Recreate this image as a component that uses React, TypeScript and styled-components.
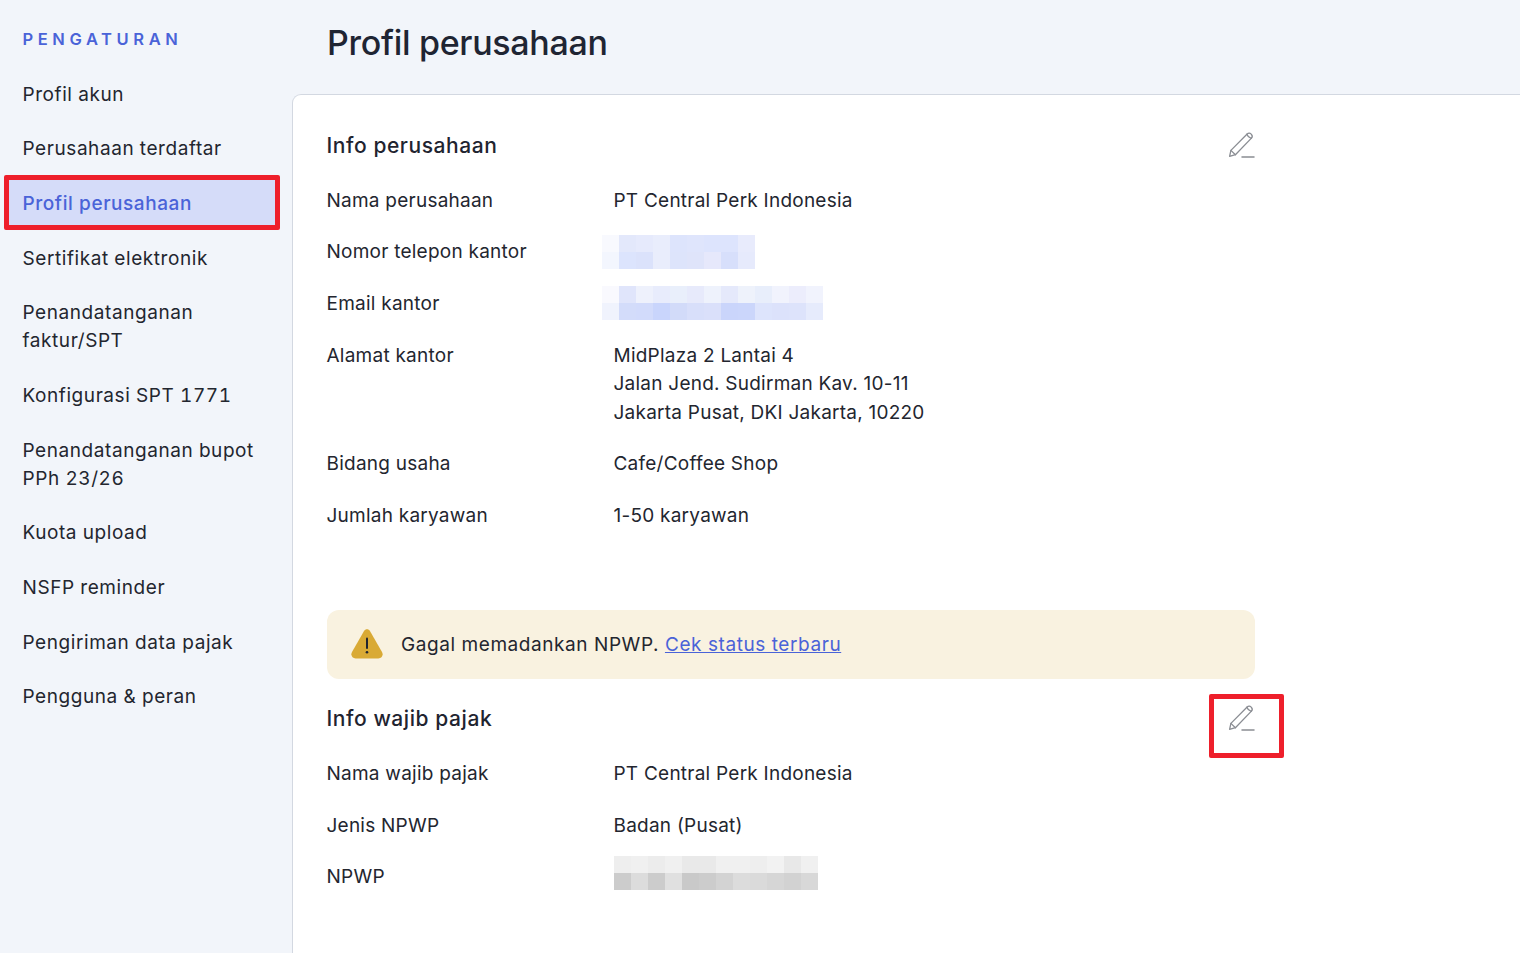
import React from "react";
import styled, { createGlobalStyle } from "styled-components";

const GlobalStyle = createGlobalStyle`
  html, body {
    margin: 0;
    padding: 0;
    height: 100%;
    overflow: hidden;
    background: #f2f5fa;
    font-family: Inter, "Liberation Sans", sans-serif;
    color: #1f2430;
  }
`;

const navItems = [
  "Profil akun",
  "Perusahaan terdaftar",
  "Profil perusahaan",
  "Sertifikat elektronik",
  "Penandatanganan faktur/SPT",
  "Konfigurasi SPT 1771",
  "Penandatanganan bupot PPh 23/26",
  "Kuota upload",
  "NSFP reminder",
  "Pengiriman data pajak",
  "Pengguna & peran",
];

const phonePixels = [
  ["#f8f9fe", "#e3e8fb", "#e6eafc", "#e9edfc", "#dde4fc", "#dfe5fc", "#dde4fd", "#dde4fd", "#e8ebfc"],
  ["#f3f6fe", "#dce4fd", "#dbe2fb", "#e9edfc", "#dde4fb", "#dfe4fa", "#e6e8fb", "#d7dffb", "#e6eafc"],
];

const emailPixels = [
  ["#f9f9fe", "#e0e5fb", "#eef1fc", "#e8ecfc", "#e9effb", "#e7eafb", "#eef2fc", "#e5e9fb", "#eef2fb", "#e8eefb", "#f1f3fd", "#ecedfc", "#f1f3fd"],
  ["#f0f3fd", "#d3dcfa", "#d2dbfb", "#c9d5fc", "#d2dbf9", "#d8dffa", "#dae0fa", "#cad5fb", "#cbd6fb", "#dde4fc", "#dce2fb", "#dde3fb", "#e6ebfc"],
];

const npwpPixels = [
  ["#eeeeee", "#f0f0f0", "#ececec", "#f0f0f0", "#e9e9e9", "#e9e9e9", "#f0f0f0", "#f0f0f0", "#eeeeee", "#f2f2f2", "#e8e8e8", "#f0f0f0"],
  ["#cccccc", "#dcdcdc", "#cccccc", "#e0e0e0", "#c9c9c9", "#cccccc", "#d3d3d3", "#dcdcdc", "#dadada", "#d6d6d6", "#d2d2d2", "#d8d8d8"],
];

function Pixels({ rows, blue }: { rows: string[][]; blue?: boolean }) {
  return (
    <PixelGrid $blue={blue}>
      {rows.map((row, r) => (
        <PixelRow key={r}>
          {row.map((color, c) => (
            <Pixel key={c} $color={color} />
          ))}
        </PixelRow>
      ))}
    </PixelGrid>
  );
}

function PencilIcon() {
  return (
    <svg width="28" height="28" viewBox="0 0 28 28" fill="none" stroke="#8a8d93" strokeWidth="1.3" strokeLinejoin="round" strokeLinecap="round">
      <path d="M2.6 25.4 L3.9 19.4 L19.9 3.2 C21.2 2 23.1 2 24.2 3.1 C25.4 4.3 25.4 6.2 24.2 7.4 L8.4 23.7 Z" />
      <path d="M19.9 3.2 C20.6 5.2 22.2 6.8 24.2 7.4" />
      <path d="M3.9 19.4 L8.4 23.7" />
      <path d="M15 26 H27" strokeWidth="1.5" />
    </svg>
  );
}

function WarningIcon() {
  return (
    <svg width="32" height="30" viewBox="0 0 32 30">
      <path
        d="M12.9 2.2 C14.5 -0.4 17.5 -0.4 19.1 2.2 L31 23 C32.7 26 30.8 29.5 27.4 29.5 H4.6 C1.2 29.5 -0.7 26 1 23 Z"
        fill="#d9aa35"
      />
      <path d="M16 9.5 V19" stroke="#1f2430" strokeWidth="2" strokeLinecap="round" />
      <circle cx="16" cy="23.2" r="1.3" fill="#1f2430" />
    </svg>
  );
}

export default function App() {
  return (
    <>
      <GlobalStyle />
      <Page>
        <Sidebar>
          <SidebarTitle>PENGATURAN</SidebarTitle>
          <NavList>
            {navItems.map((item) => (
              <NavItem key={item} $active={item === "Profil perusahaan"}>
                {item}
              </NavItem>
            ))}
          </NavList>
        </Sidebar>
        <Main>
          <PageHeader>
            <PageTitle>Profil perusahaan</PageTitle>
          </PageHeader>
          <Panel>
            <Content>
              <SectionHead>
                <SectionTitle>Info perusahaan</SectionTitle>
                <EditButton>
                  <PencilIcon />
                </EditButton>
              </SectionHead>
              <Rows>
                <Row>
                  <Label>Nama perusahaan</Label>
                  <Value>PT Central Perk Indonesia</Value>
                </Row>
                <Row>
                  <Label>Nomor telepon kantor</Label>
                  <Pixels rows={phonePixels} blue />
                </Row>
                <Row>
                  <Label>Email kantor</Label>
                  <Pixels rows={emailPixels} blue />
                </Row>
                <Row>
                  <Label>Alamat kantor</Label>
                  <Value>
                    MidPlaza 2 Lantai 4
                    <br />
                    Jalan Jend. Sudirman Kav. 10-11
                    <br />
                    Jakarta Pusat, DKI Jakarta, 10220
                  </Value>
                </Row>
                <Row>
                  <Label>Bidang usaha</Label>
                  <Value>Cafe/Coffee Shop</Value>
                </Row>
                <Row>
                  <Label>Jumlah karyawan</Label>
                  <Value>1-50 karyawan</Value>
                </Row>
              </Rows>
              <Banner>
                <WarningIcon />
                <BannerText>
                  Gagal memadankan NPWP. <BannerLink href="#">Cek status terbaru</BannerLink>
                </BannerText>
              </Banner>
              <SectionHead $tight>
                <SectionTitle>Info wajib pajak</SectionTitle>
                <EditButton>
                  <PencilIcon />
                  <Marker />
                </EditButton>
              </SectionHead>
              <Rows>
                <Row>
                  <Label>Nama wajib pajak</Label>
                  <Value>PT Central Perk Indonesia</Value>
                </Row>
                <Row>
                  <Label>Jenis NPWP</Label>
                  <Value>Badan (Pusat)</Value>
                </Row>
                <Row>
                  <Label>NPWP</Label>
                  <Pixels rows={npwpPixels} />
                </Row>
              </Rows>
            </Content>
          </Panel>
        </Main>
      </Page>
    </>
  );
}

const Page = styled.div`
  display: flex;
  width: 1520px;
  height: 953px;
  overflow: hidden;
  background: #f2f5fa;
`;

const Sidebar = styled.aside`
  width: 292px;
  flex-shrink: 0;
  padding: 29px 11px 0 3.5px;
  box-sizing: border-box;
`;

const SidebarTitle = styled.div`
  padding-left: 19px;
  font-size: 16.5px;
  line-height: 20px;
  font-weight: 600;
  letter-spacing: 4.6px;
  color: #4a63d8;
`;

const NavList = styled.nav`
  display: flex;
  flex-direction: column;
  margin-top: 18.4px;
`;

const NavItem = styled.div<{ $active?: boolean }>`
  box-sizing: border-box;
  width: ${(p) => (p.$active ? "276.4px" : "277px")};
  font-size: 19px;
  line-height: 28px;
  letter-spacing: 0.57px;
  font-variant-numeric: tabular-nums;
  padding: ${(p) => (p.$active ? "10.1px 14px 6.9px" : "13.34px 19px")};
  margin: ${(p) => (p.$active ? "-1.6px 0 1.28px" : "0")};
  font-weight: ${(p) => (p.$active ? 500 : 400)};
  color: ${(p) => (p.$active ? "#4a63d8" : "#23262f")};
  background: ${(p) => (p.$active ? "#d5dcf9" : "transparent")};
  border: ${(p) => (p.$active ? "5px solid #ee1f2b" : "0")};
  border-radius: ${(p) => (p.$active ? "2px" : "0")};
`;

const Main = styled.main`
  flex: 1;
  display: flex;
  flex-direction: column;
  min-width: 0;
`;

const PageHeader = styled.header`
  height: 94px;
  flex-shrink: 0;
  padding: 19px 0 0 35px;
  box-sizing: border-box;
`;

const PageTitle = styled.h1`
  margin: 0;
  font-size: 34px;
  line-height: 48px;
  font-weight: 500;
  letter-spacing: -0.3px;
  color: #1f2533;
`;

const Panel = styled.section`
  flex: 1;
  background: #fff;
  border-top: 1px solid #d3d8e1;
  border-left: 1px solid #d3d8e1;
  border-top-left-radius: 9px;
  padding: 35px 0 0 33.5px;
`;

const Content = styled.div`
  width: 928.5px;
`;

const SectionHead = styled.div<{ $tight?: boolean }>`
  display: flex;
  align-items: center;
  justify-content: space-between;
  height: 30px;
  margin-top: ${(p) => (p.$tight ? "24.4px" : "0")};
`;

const SectionTitle = styled.h2`
  margin: 0;
  padding-top: 1px;
  font-size: 21px;
  line-height: 30px;
  font-weight: 500;
  letter-spacing: 0.57px;
  color: #1f2430;
`;

const EditButton = styled.button`
  position: relative;
  display: flex;
  padding: 0;
  border: 0;
  background: none;
  cursor: pointer;
`;

const Marker = styled.span`
  position: absolute;
  left: -18px;
  top: -10.4px;
  width: 75px;
  height: 64.4px;
  box-sizing: border-box;
  border: 5px solid #ee1f2b;
  border-radius: 2px;
`;

const Rows = styled.div`
  display: flex;
  flex-direction: column;
  gap: 23px;
  margin-top: 26.9px;
`;

const Row = styled.div`
  display: flex;
  font-size: 19px;
  line-height: 28.6px;
  letter-spacing: 0.24px;
  color: #23262f;
`;

const Label = styled.div`
  width: 287px;
  flex-shrink: 0;
`;

const Value = styled.div``;

const PixelGrid = styled.div<{ $blue?: boolean }>`
  display: flex;
  flex-direction: column;
  height: 28.6px;
  margin-left: ${(p) => (p.$blue ? "-11.5px" : "0.5px")};
  margin-top: ${(p) => (p.$blue ? "-3.8px" : "-7.4px")};
`;

const PixelRow = styled.div`
  display: flex;
  flex-shrink: 0;
`;

const Pixel = styled.span<{ $color: string }>`
  width: 17px;
  height: 17px;
  background: ${(p) => p.$color};
`;

const Banner = styled.div`
  display: flex;
  align-items: center;
  gap: 18.5px;
  height: 69px;
  margin-top: 79.3px;
  padding-left: 24px;
  box-sizing: border-box;
  background: #f9f2e0;
  border-radius: 12px;
`;

const BannerText = styled.div`
  padding-top: 1px;
  font-size: 19px;
  line-height: 28px;
  letter-spacing: 0.57px;
  color: #23262f;
`;

const BannerLink = styled.a`
  color: #4a63d8;
  text-decoration: underline;
`;
